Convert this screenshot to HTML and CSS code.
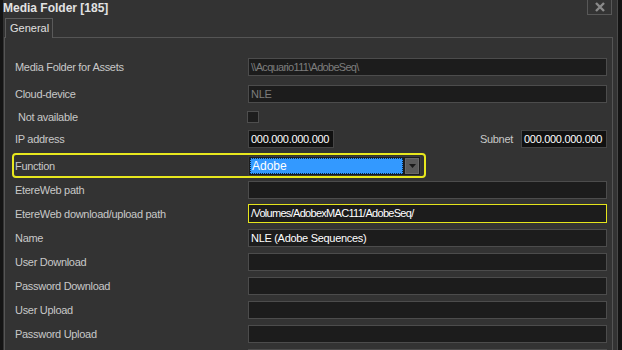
FILE: index.html
```html
<!DOCTYPE html>
<html lang="en">
<head>
  <meta charset="UTF-8">
  <title>Media Folder [185]</title>
  <link rel="stylesheet" href="styles.css">
</head>
<body>
  <div class="window">
    <!-- Barra del titulo -->
    <div class="titlebar">
      <span class="title">Media Folder [185]</span>
      <button class="close">
        <svg width="12" height="10" viewBox="0 0 12 10">
          <path d="M2 1 L10 9 M10 1 L2 9" stroke="#8a8a8a" stroke-width="2.4" fill="none"/>
        </svg>
      </button>
    </div>

    <div class="tabs">
      <div class="tab">General</div>
    </div>

    <div class="panel">
      <div class="row">
        <label>Media Folder for Assets</label>
        <div class="field disabled narrow">\\Acquario111\AdobeSeq\</div>
      </div>
      <div class="row r-cloud">
        <label>Cloud-device</label>
        <div class="field disabled">NLE</div>
      </div>
      <div class="row r-check">
        <label class="indent">Not available</label>
        <span class="checkbox"></span>
      </div>
      <div class="row r-ip">
        <label>IP address</label>
        <div class="field ip">000.000.000.000</div>
        <span class="subnet-label">Subnet</span>
        <div class="field ip">000.000.000.000</div>
      </div>
      <div class="row highlight">
        <label>Function</label>
        <div class="select">
          <span class="selected">Adobe</span>
          <span class="arrow">
            <svg width="7" height="4" viewBox="0 0 7 4"><path d="M0 0 H7 L3.5 4 Z" fill="#1a1a1a"/></svg>
          </span>
        </div>
      </div>
      <div class="row r-web">
        <label>EtereWeb path</label>
        <div class="field"></div>
      </div>
      <div class="row r-dl">
        <label>EtereWeb download/upload path</label>
        <div class="field focused narrow">/Volumes/AdobexMAC111/AdobeSeq/</div>
      </div>
      <div class="row">
        <label>Name</label>
        <div class="field">NLE (Adobe Sequences)</div>
      </div>
      <div class="row">
        <label>User Download</label>
        <div class="field"></div>
      </div>
      <div class="row">
        <label>Password Download</label>
        <div class="field"></div>
      </div>
      <div class="row">
        <label>User Upload</label>
        <div class="field"></div>
      </div>
      <div class="row">
        <label>Password Upload</label>
        <div class="field"></div>
      </div>
      <div class="row">
        <label></label>
        <div class="field"></div>
      </div>
    </div>
  </div>
</body>
</html>
```

FILE: styles.css
```css
body {
  margin: 0;
  background-color: #141414;
  font-family: "Liberation Sans", Arial, sans-serif;
  font-size: 11px;
  color: #c8c8c8;
  overflow: hidden;
}
.window {
  margin-left: 3px;
  margin-right: 4px;
  height: 350px;
  overflow: hidden;
  background: #333333;
  border-right: 1px solid #4a4a4a;
}
.titlebar {
  height: 17px;
  display: flex;
  justify-content: space-between;
  align-items: flex-start;
  padding-right: 5px;
}
.title {
  font-weight: bold;
  font-size: 12px;
  color: #e2e2e2;
  line-height: 17px;
}
.close {
  width: 25px;
  height: 16px;
  margin-top: -1px;
  padding: 0;
  border: 1px solid #585858;
  background: #333;
  display: flex;
  align-items: center;
  justify-content: center;
}
.tabs {
  height: 20px;
  padding-left: 2px;
  display: flex;
}
.tab {
  width: 48px;
  height: 20px;
  box-sizing: border-box;
  border: 1px solid #5a5a5a;
  border-bottom: none;
  padding: 3px 0 0 4px;
  color: #e0e0e0;
  background: #333;
  position: relative;
  top: 1px;
}
.panel {
  margin-left: 1px;
  margin-right: 4px;
  height: 320px;
  border: 1px solid #555;
  padding: 20px 5px 0 10px;
  display: flex;
  flex-direction: column;
  gap: 6px;
}
.row {
  display: flex;
  align-items: center;
  height: 18px;
  flex-shrink: 0;
}
.row label {
  width: 233px;
  flex-shrink: 0;
  letter-spacing: -0.3px;
}
.row label.indent {
  padding-left: 3px;
  box-sizing: border-box;
}
.r-cloud { margin-top: 3px; }
.r-check { margin-top: -1px; }
.r-ip { margin-top: -2px; }
.highlight { margin-top: -1px; }
.r-web { margin-top: -3px; }
.r-dl { margin-top: -1px; height: 19px; }

.field {
  flex: 1;
  height: 100%;
  box-sizing: border-box;
  background: #1c1c1c;
  border: 1px solid #4c4c4c;
  color: #ffffff;
  padding-left: 2px;
  line-height: 16px;
  letter-spacing: -0.3px;
  white-space: nowrap;
}
.field.narrow {
  letter-spacing: -0.7px;
}
.field.disabled {
  color: #7c7c7c;
}
.field.ip {
  flex: 0 0 86px;
  background: #111;
  border-color: #454545;
}
.field.focused {
  border-color: #e4e41c;
}
.subnet-label {
  margin-left: auto;
  margin-right: 8px;
  letter-spacing: -0.3px;
}
.checkbox {
  width: 12px;
  height: 12px;
  box-sizing: border-box;
  margin-left: -1px;
  background: #1e1e1e;
  border: 1px solid #4e4e4e;
}
.highlight {
  height: 25px;
  width: 414px;
  box-sizing: border-box;
  margin-left: -3px;
  padding: 0 3px 0 1px;
  border: 2px solid #e8e81e;
  border-radius: 4px;
}
.select {
  width: 173px;
  height: 20px;
  box-sizing: border-box;
  border: 1px solid #3a3a3a;
  background: #1c1c1c;
  padding: 1px;
  display: flex;
  gap: 2px;
}
.selected {
  flex: 1;
  background: #3399ff;
  color: #fff;
  outline: 1px dotted #0b2a4a;
  outline-offset: -1px;
  padding-left: 2px;
  line-height: 16px;
  font-size: 12px;
}
.arrow {
  width: 14px;
  background: #5a5a5a;
  border: 1px solid #6a6a6a;
  box-sizing: border-box;
  display: flex;
  align-items: center;
  justify-content: center;
}
```
